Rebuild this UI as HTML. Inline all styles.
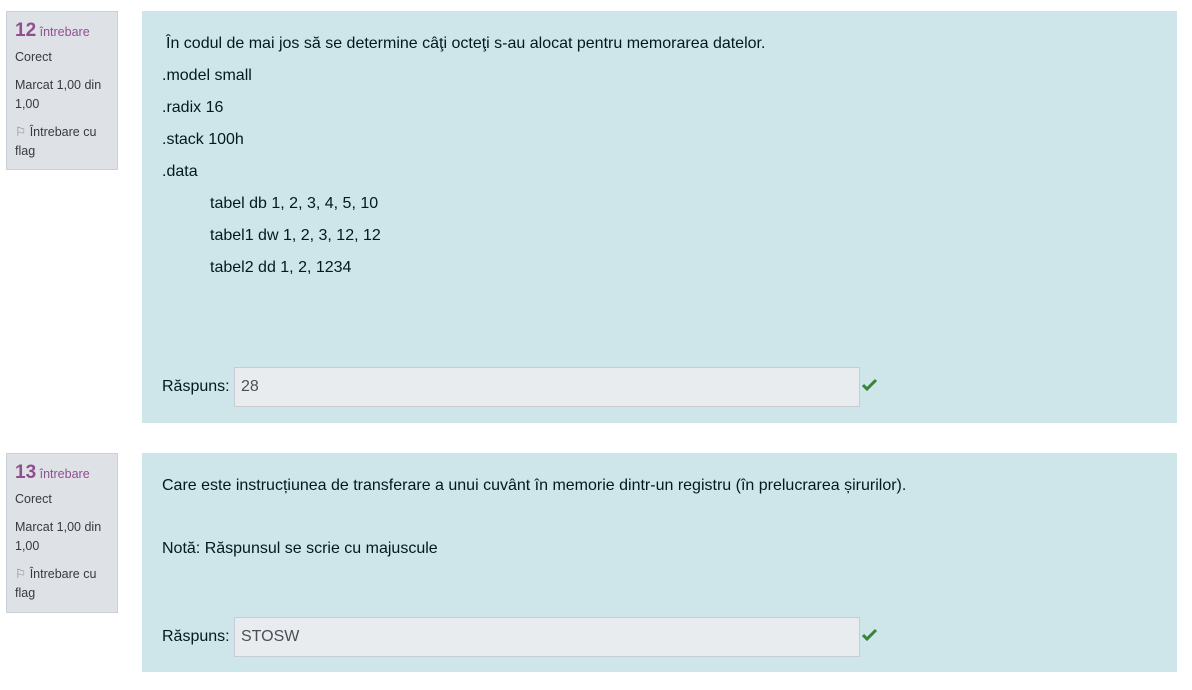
<!DOCTYPE html>
<html><head><meta charset="utf-8"><style>
body{margin:0;width:1192px;height:690px;background:#fff;font-family:"Liberation Sans",Arial,sans-serif;position:relative;overflow:hidden}
.info{position:absolute;left:6px;width:112px;height:159px;background:#dee2e6;border:1px solid #cad0d7;box-sizing:border-box;padding:9px 8px;color:#373a3c;font-size:12.5px;line-height:19px}
.info .n{color:#8f4f8f;font-size:12.5px}
.info .n b{font-size:19px;font-weight:bold}
.info p{margin:0}
.q{position:absolute;left:142px;width:1035px;background:#cee6ea;color:#001a1e;font-size:16px}
.q div{position:absolute;white-space:nowrap;line-height:18px}
.inp{position:absolute;left:92px;width:626px;height:40px;background:#e9ecef;border:1px solid #c6ccd2;box-sizing:border-box;padding:0 6px;line-height:38px;color:#495057;font-size:16px}
.ck{position:absolute;left:720px}
</style></head><body>
<div class="info" style="top:11px">
<p class="n" style="margin-bottom:6px"><b>12</b> întrebare</p>
<p style="margin-bottom:9px">Corect</p>
<p style="margin-bottom:9px">Marcat 1,00 din 1,00</p>
<p><span style="color:#888">&#9872;</span> Întrebare cu flag</p>
</div>
<div class="q" style="top:11px;height:412px">
<div style="left:24px;top:24px">În codul de mai jos să se determine câţi octeţi s-au alocat pentru memorarea datelor.</div>
<div style="left:20px;top:56px">.model small</div>
<div style="left:20px;top:88px">.radix 16</div>
<div style="left:20px;top:120px">.stack 100h</div>
<div style="left:20px;top:152px">.data</div>
<div style="left:68px;top:184px">tabel db 1, 2, 3, 4, 5, 10</div>
<div style="left:68px;top:216px">tabel1 dw 1, 2, 3, 12, 12</div>
<div style="left:68px;top:248px">tabel2 dd 1, 2, 1234</div>
<div style="left:20px;top:367px">Răspuns:</div>
<span class="inp" style="top:356px">28</span>
<svg class="ck" style="top:367px" width="16" height="14" viewBox="0 0 16 14"><path d="M1 7l4 4 9-9" stroke="#398439" stroke-width="3" fill="none"/></svg>
</div>

<div class="info" style="top:453px;height:160px">
<p class="n" style="margin-bottom:6px"><b>13</b> întrebare</p>
<p style="margin-bottom:9px">Corect</p>
<p style="margin-bottom:9px">Marcat 1,00 din 1,00</p>
<p><span style="color:#888">&#9872;</span> Întrebare cu flag</p>
</div>
<div class="q" style="top:453px;height:219px">
<div style="left:20px;top:24px">Care este instrucțiunea de transferare a unui cuvânt în memorie dintr-un registru (în prelucrarea șirurilor).</div>
<div style="left:20px;top:87px">Notă: Răspunsul se scrie cu majuscule</div>
<div style="left:20px;top:175px">Răspuns:</div>
<span class="inp" style="top:164px">STOSW</span>
<svg class="ck" style="top:175px" width="16" height="14" viewBox="0 0 16 14"><path d="M1 7l4 4 9-9" stroke="#398439" stroke-width="3" fill="none"/></svg>
</div>
</body></html>
